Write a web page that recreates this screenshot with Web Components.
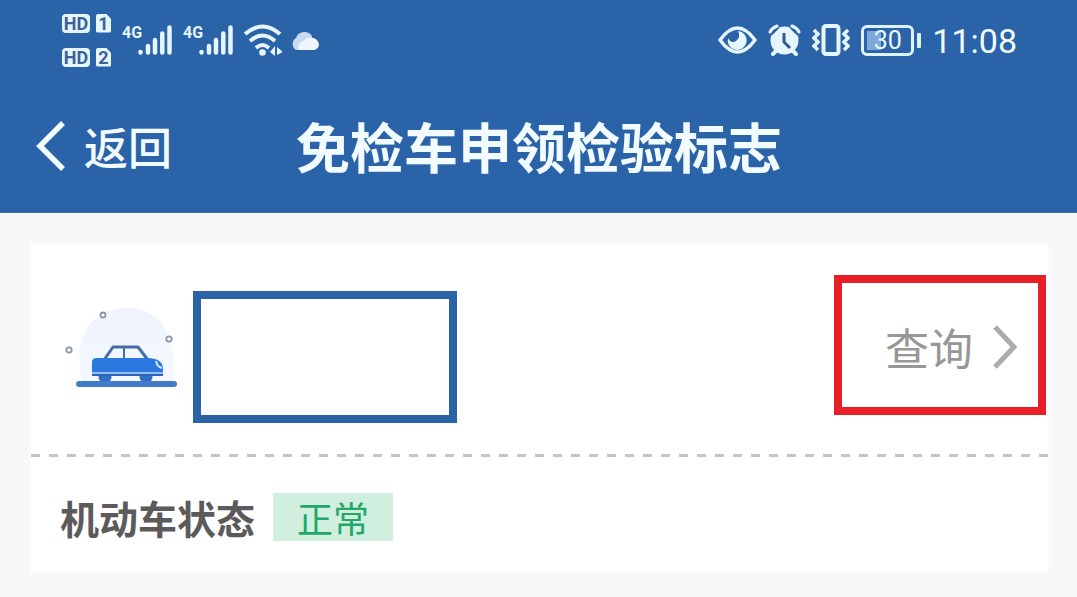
<!DOCTYPE html>
<html lang="zh-CN">
<head>
<meta charset="utf-8">
<meta name="viewport" content="width=device-width, initial-scale=1">
<title>免检车申领检验标志</title>
<style>
  body { margin: 0; min-height: 100vh; background: #f7f7f9; font-family: "Noto Sans CJK SC", sans-serif; }
</style>
</head>
<body>
<inspection-app></inspection-app>
<script>
const define = (name, html) => customElements.define(name, class extends HTMLElement {
  constructor() {
    super();
    this.attachShadow({ mode: 'open' }).innerHTML = '<style>*{box-sizing:border-box}svg{display:block}</style>' + html;
  }
});

// Badge pair for one HD voice line
define('hd-line', `
<style>
  :host { display: flex; gap: 6px; height: 19px; color: #3b6298; font: bold 18px/19px Roboto, sans-serif; text-align: center; }
  .hd { width: 28px; background: #e6f6ff; border-radius: 4px; }
  .sim { width: 15px; background: #e6f6ff; border-radius: 2px; clip-path: polygon(0 0, 66% 0, 100% 28%, 100% 100%, 0 100%); }
</style>
<span class="hd">HD</span><span class="sim"><slot></slot></span>`);

define('signal-bars', `
<style>
  :host { display: flex; height: 32px; color: #e6f6ff; font: bold 16px/18px Roboto, sans-serif; }
  span { width: 16px; }
</style>
<span>4G</span>
<svg width="34" height="32" viewBox="0 0 34 32" fill="none" stroke="#e6f6ff" stroke-width="4.500" stroke-linecap="round"><path d="M2.500 28v.5M10 22v6.500M17 16v12.500M24.300 9.500v19M31.500 3.500v25"/></svg>`);

define('status-bar', `
<style>
  :host { display: flex; justify-content: space-between; align-items: center; height: 80px; padding: 0 60px 0 62px; }
  div { display: flex; align-items: center; }
  .lines { flex-direction: column; gap: 15px; margin-right: 11px; }
  signal-bars { margin-right: 11px; }
  .left svg { margin-right: 7px; }
  .right { gap: 11px; }
  .battery { width: 60px; gap: 3px; }
  .cell { width: 53px; height: 31px; justify-content: center; border: 3px solid #dff2ff; border-radius: 6px; color: #e9f7ff; font: 25px/25px Roboto, sans-serif; background: linear-gradient(90deg, #7fa8db 0 14px, transparent 14px) 3px 3px / 41px 19px no-repeat; }
  .tip { width: 4px; height: 15px; border-radius: 1px; background: #dff2ff; }
  time { color: #f0faff; font: 34px/40px Roboto, sans-serif; padding-top: 2px; }
</style>
<div class="left">
  <div class="lines"><hd-line>1</hd-line><hd-line>2</hd-line></div>
  <signal-bars></signal-bars><signal-bars></signal-bars>
  <svg width="38" height="32" viewBox="0 0 38 32" fill="none" stroke="#e6f6ff" stroke-width="4"><path d="M1 10Q18.500-5 36 10M6 17Q18.500 6 31 17M12 24Q18.500 18 25 24"/><circle cx="18.500" cy="28.500" r="3.300" fill="#e6f6ff" stroke="none"/><path d="M31 22v10l-5-4zM33 23l6 5-6 3z" fill="#e6f6ff" stroke="none"/></svg>
  <svg width="31" height="21" viewBox="0 0 31 21"><path d="M7 20a7 7 0 0 1 0-12A9 9 0 0 1 23 6l-2 14z" fill="#c9daf5"/><path d="M10 20a6 6 0 0 1 5-9 8.500 8.500 0 0 1 15 3c0 4-3 6-6 6z" fill="#f1f6fd"/></svg>
</div>
<div class="right">
  <svg width="39" height="28" viewBox="0 0 39 28"><path d="M2 14Q19.500-10 37 14 19.500 38 2 14z" fill="none" stroke="#e6f6ff" stroke-width="3.500" stroke-linejoin="round"/><path d="M20 5a9.500 9.500 0 1 1-10 7q3 6 8 3 5-4 2-10z" fill="#e6f6ff"/></svg>
  <svg width="33" height="32" viewBox="0 0 33 32"><path d="M8 27l-3 3M25 27l3 3" stroke="#e6f6ff" stroke-width="4" stroke-linecap="round"/><circle cx="16.500" cy="16.500" r="14" fill="#e6f6ff"/><path d="M1 8L8 1M32 8L25 1" fill="none" stroke="#2a63a8" stroke-width="9"/><path d="M2 8Q4 4 9 2M31 8Q29 4 24 2" fill="none" stroke="#e6f6ff" stroke-width="3" stroke-linecap="round"/><path d="M16 9v9l6 6" fill="none" stroke="#345987" stroke-width="3"/></svg>
  <svg width="38" height="32" viewBox="0 0 38 32" fill="none" stroke="#e6f6ff" stroke-width="4"><rect x="11.500" y="2" width="15" height="28" rx="2.500"/><path d="M2 6l4 4-4 4 4 4-4 4 4 4M36 6l-4 4 4 4-4 4 4 4-4 4" stroke-width="3.500"/></svg>
  <div class="battery"><div class="cell">30</div><div class="tip"></div></div>
  <time>11:08</time>
</div>`);

define('nav-bar', `
<style>
  :host { display: grid; grid-template-columns: 1fr auto 1fr; align-items: center; height: 132px; padding: 0 35px 0 36px; color: #f2fbff; }
  button { justify-self: start; display: flex; align-items: center; gap: 19px; padding: 0; border: 0; background: none; color: inherit; font: 500 44px/64px "Noto Sans CJK SC", sans-serif; }
  h1 { margin: 0; font: bold 54px/80px "Noto Sans CJK SC", sans-serif; }
</style>
<button type="button"><svg width="29" height="50" viewBox="0 0 29 50" fill="none" stroke="#f2fbff" stroke-width="5.500"><path d="M27 2L4 25l23 23"/></svg>返回</button>
<h1>免检车申领检验标志</h1>`);

define('car-icon', `
<style>:host { display: block; width: 116px; height: 84px; }</style>
<svg width="116" height="84" viewBox="0 0 116 84">
  <defs><linearGradient id="sky" x1="0" y1="0" x2="0" y2="1"><stop offset="0" stop-color="#eef3fd"/><stop offset="1" stop-color="#f5f8fe"/></linearGradient></defs>
  <path d="M18 75Q9 30 31 12 54-6 83 5q14 6 20 22 10 20 6 48z" fill="url(#sky)"/>
  <g fill="#fff" stroke="#8997a8" stroke-width="1.800"><circle cx="39" cy="8" r="2.500"/><circle cx="105" cy="32" r="2.700"/><circle cx="5" cy="43" r="2.700"/></g>
  <path d="M40 53l9-13h25l10 13z" fill="#f2f7ff" stroke="#426da5" stroke-width="3" stroke-linejoin="round"/><path d="M60 40v13" stroke="#426da5" stroke-width="2"/>
  <g fill="#326fc2"><circle cx="41" cy="70" r="6.500"/><circle cx="82" cy="70" r="6.500"/></g>
  <path d="M28 55q0-4 5-4h52q14 1 14 11v7H28z" fill="#2b78df"/>
  <path d="M92 54q1 6 6 7" fill="none" stroke="#dceaff" stroke-width="1.800"/>
  <path d="M28 66h71" stroke="#b9d4f8" stroke-width="1.500"/><path d="M28 68h71" stroke="#2868ba" stroke-width="2"/>
  <rect x="12" y="74" width="101" height="6" rx="3" fill="#437bcb"/>
</svg>`);

define('vehicle-row', `
<style>
  :host { display: flex; align-items: center; height: 210px; padding: 0 2px 0 33px; }
  .plate { width: 264px; height: 132px; margin: 16px 0 0 13px; border: 8px solid #2a63a8; background: #fff; }
  button { display: flex; align-items: center; justify-content: flex-end; gap: 20px; width: 212px; height: 140px; margin: 0 0 8px auto; padding: 4px 20px 0 0; border: 8px solid #e81f27; background: #fff; color: #979797; font: 44px/64px "Noto Sans CJK SC", sans-serif; }
</style>
<car-icon></car-icon>
<div class="plate"></div>
<button type="button">查询<svg width="25" height="44" viewBox="0 0 25 44" fill="none" stroke="#acacac" stroke-width="5"><path d="M2 2l19 20L2 42"/></svg></button>`);

define('status-row', `
<style>
  :host { display: flex; align-items: center; gap: 18px; height: 115px; padding: 4px 29px 0; color: #5c5a5b; font: bold 39px/56px "Noto Sans CJK SC", sans-serif; }
  .state { width: 120px; height: 48px; background: #d0efdf; color: #23a868; font: 36px/48px "Noto Sans CJK SC", sans-serif; text-align: center; }
</style>
<span><slot></slot></span><span class="state"><slot name="state"></slot></span>`);

define('inspection-app', `
<style>
  :host { display: block; }
  header { background: #2a63a8; border-bottom: 1px solid #3c6f9b; }
  main { margin: 31px 29px 24px 31px; background: #fff; box-shadow: 0 0 4px #fff; }
  hr { height: 3px; margin: 0; border: 0; background: repeating-linear-gradient(90deg, #c4c4c4 0 9px, transparent 9px 18px); }
</style>
<header><status-bar></status-bar><nav-bar></nav-bar></header>
<main>
  <vehicle-row></vehicle-row>
  <hr>
  <status-row>机动车状态<span slot="state">正常</span></status-row>
</main>`);
</script>
</body>
</html>
